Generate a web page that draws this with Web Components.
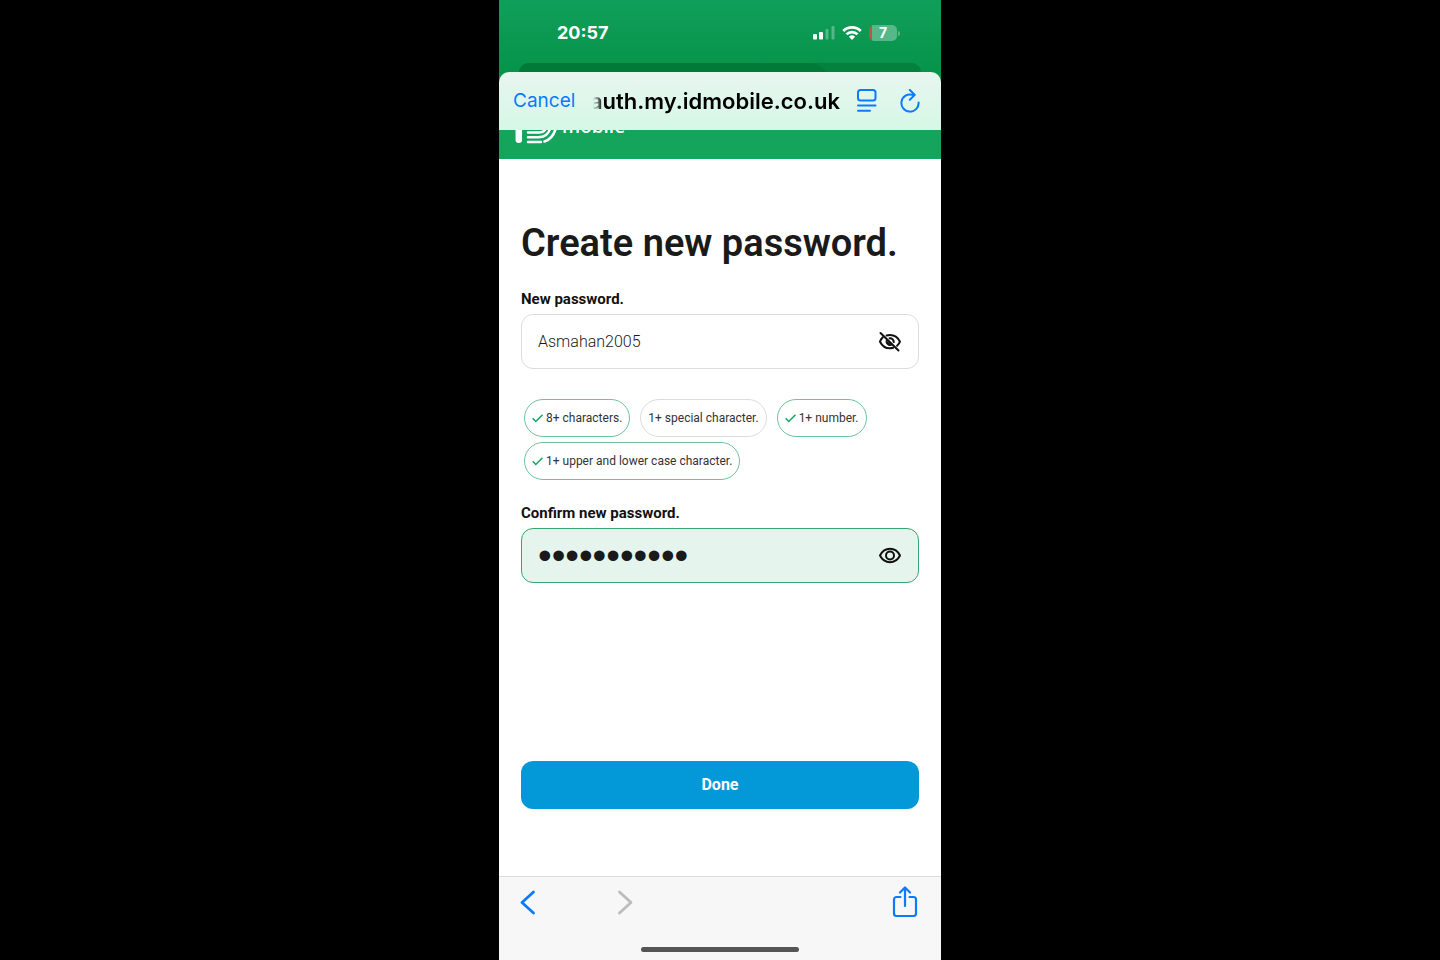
<!DOCTYPE html>
<html lang="en">
<head>
<meta charset="utf-8">
<meta name="viewport" content="width=device-width, initial-scale=1">
<title>Create new password</title>
<style>
  html, body {
    margin: 0;
    background: #000;
  }
</style>
</head>
<body>
<phone-screen>
  <status-bar slot="status" time="20:57" battery="7"></status-bar>
  <browser-bar slot="bar">auth.my.idmobile.co.uk</browser-bar>
  <site-header></site-header>
  <password-form>
    <span slot="title">Create new password.</span>
    <password-field label="New password." value="Asmahan2005" shown></password-field>
    <div slot="rules">
      <rule-chip met>8+ characters.</rule-chip>
      <rule-chip>1+ special character.</rule-chip>
      <rule-chip met>1+ number.</rule-chip>
      <rule-chip met>1+ upper and lower case character.</rule-chip>
    </div>
    <password-field slot="confirm" label="Confirm new password." value="Asmahan2005" valid></password-field>
  </password-form>
  <browser-toolbar slot="toolbar"></browser-toolbar>
</phone-screen>

<script>
// every element renders its template into an open shadow root
class Base extends HTMLElement {
  constructor() {
    super();
    this.dom = this.attachShadow({ mode: "open" });
  }

  connectedCallback() {
    const temp = document.createElement("template");
    temp.innerHTML = this.template();
    this.dom.appendChild(document.importNode(temp.content, true));
    if (this.ready) this.ready();
  }
}

class PhoneScreen extends Base {
  template() {
    return `
<style>
  :host {
    display: flex;
    flex-direction: column;
    max-width: 442px;
    min-height: 100vh;
    margin: 0 auto;
    background: #fff;
    font-family: Roboto, "Liberation Sans", sans-serif;
    color: #1a1a1a;
  }
  main {
    display: flex;
    flex-direction: column;
    flex: 1;
  }
</style>
<slot name="status"></slot>
<slot name="bar"></slot>
<main><slot></slot></main>
<slot name="toolbar"></slot>`;
  }
}

class StatusBar extends Base {
  template() {
    return `
<style>
  :host {
    display: flex;
    flex-direction: column;
    justify-content: space-between;
    height: 72px;
    background: linear-gradient(#109f5a, #06934a);
    color: #fff;
    font-family: Inter, sans-serif;
  }
  .row {
    display: flex;
    align-items: center;
    justify-content: space-between;
    padding: 20px 41px 0 58px;
    font-size: 18px;
    font-weight: 700;
    line-height: 26px;
  }
  .icons {
    display: flex;
    align-items: center;
    gap: 7px;
  }
  svg {
    display: block;
  }
  .battery {
    display: flex;
    align-items: center;
    gap: 1px;
  }
  .level {
    width: 28px;
    border-radius: 5px;
    background: linear-gradient(90deg, #b9573f 3px, #56b789 3px);
    font-size: 14px;
    line-height: 16px;
    text-align: center;
  }
  .cap {
    width: 2px;
    height: 5px;
    border-radius: 0 2px 2px 0;
    background: #56b789;
  }
  .behind {
    height: 9px;
    margin: 0 20px;
    border-radius: 9px 9px 0 0;
    background: linear-gradient(35deg, #027a37 74%, #04813f 75%);
  }
</style>
<div class="row">
  <span>${this.getAttribute("time")}</span>
  <div class="icons">
    <svg width="22" height="15" viewBox="0 0 22 15" fill="#fff">
      <rect x="0" y="8" width="4" height="5.500" rx="1"/>
      <rect x="6" y="6" width="4" height="7.500" rx="1"/>
      <rect x="12.500" y="3" width="3" height="10.500" rx="1" opacity=".3"/>
      <rect x="18.500" y="0" width="3" height="13.500" rx="1" opacity=".3"/>
    </svg>
    <svg width="20" height="15" viewBox="0 0 20 15" fill="none" stroke="#fff" stroke-width="2.7">
      <path d="M1.2 5a12.6 12.6 0 0 1 17.6 0M4.5 8.400a7.9 7.9 0 0 1 11 0"/>
      <path d="M10 13.900 6.9 10.800a4.5 4.5 0 0 1 6.2 0z" fill="#fff" stroke="none"/>
    </svg>
    <div class="battery">
      <span class="level">${this.getAttribute("battery")}</span>
      <span class="cap"></span>
    </div>
  </div>
</div>
<div class="behind"></div>`;
  }
}

class BrowserBar extends Base {
  template() {
    return `
<style>
  :host {
    display: block;
    position: relative;
    z-index: 1;
    background: #06934a;
    font-family: Inter, sans-serif;
  }
  header {
    display: flex;
    align-items: center;
    height: 58px;
    padding: 0 21px 0 14px;
    border-radius: 10px 10px 0 0;
    background: linear-gradient(#e8f6ef, #d5f8e6);
  }
  button {
    padding: 0;
    border: 0;
    background: none;
    color: #0a7aff;
    font: 400 19px/28px Inter, sans-serif;
  }
  .address {
    display: flex;
    flex: 1;
    justify-content: flex-end;
    overflow: hidden;
    margin: 0 17px 0 18px;
    color: #000;
    font-size: 22px;
    font-weight: 600;
    line-height: 28px;
    white-space: nowrap;
    -webkit-mask-image: linear-gradient(90deg, transparent, #000 10px);
    mask-image: linear-gradient(90deg, transparent, #000 10px);
  }
  .reload {
    margin-left: 23px;
  }
  svg {
    display: block;
    fill: none;
    stroke: currentColor;
    stroke-width: 2;
    stroke-linecap: round;
    stroke-linejoin: round;
  }
</style>
<header>
  <button type="button">Cancel</button>
  <div class="address"><slot></slot></div>
  <button type="button" aria-label="Page menu">
    <svg width="20" height="24" viewBox="0 0 20 24">
      <rect x="1" y="1" width="17.500" height="10.500" rx="2.500"/>
      <path d="M1 16.500h17.500M1 21.800h12"/>
    </svg>
  </button>
  <button type="button" class="reload" aria-label="Reload">
    <svg width="20" height="24" viewBox="0 0 20 24">
      <path d="M12.500 5.800A8.600 8.600 0 1 0 18.600 13.500M9.800 1l5 4.900-5 4.900"/>
    </svg>
  </button>
</header>`;
  }
}

class SiteHeader extends Base {
  template() {
    return `
<style>
  :host {
    display: block;
    margin-top: -30px;
    background: #14a45c;
    color: #fff;
  }
  a {
    display: flex;
    align-items: flex-end;
    gap: 4px;
    padding: 1px 16px 15px;
    color: inherit;
    font: 600 19px/28px "Open Sans", sans-serif;
    text-decoration: none;
  }
  svg {
    display: block;
  }
  span {
    margin-bottom: 4px;
  }
</style>
<a href="#">
  <svg width="43" height="43" viewBox="0 0 43 43" fill="none" stroke="#fff" stroke-linecap="round">
    <path d="M3.800 14v24.800" stroke-width="6.500"/>
    <circle cx="3.800" cy="4" r="3.500" fill="#fff" stroke="none"/>
    <path d="M13 31.500h11c5 0 8-3 8-11S28 7 21 7h-8" stroke-width="2.500"/>
    <path d="M13 36.300h10c7 0 10-3 12.500-9" stroke-width="2.500"/>
    <path d="M13 41h13M29.500 40.500c6-2 9-6 11-12" stroke-width="2.500"/>
  </svg>
  <span>mobile</span>
</a>`;
  }
}

class PasswordForm extends Base {
  template() {
    return `
<style>
  :host {
    display: flex;
    flex: 1;
  }
  form {
    display: flex;
    flex: 1;
    flex-direction: column;
    min-width: 0;
    padding: 59px 22px 67px;
  }
  h1 {
    margin: 0 0 20px;
    font-size: 38px;
    font-weight: 600;
    line-height: 50px;
  }
  ::slotted([slot="rules"]) {
    display: flex;
    flex-wrap: wrap;
    gap: 5px 10px;
    margin: 30px 3px 22px;
  }
  button {
    height: 48px;
    margin-top: auto;
    border: 0;
    border-radius: 12px;
    background: #0398d8;
    color: #fff;
    font: 700 16px/24px Roboto, sans-serif;
  }
</style>
<form>
  <h1><slot name="title"></slot></h1>
  <slot></slot>
  <slot name="rules"></slot>
  <slot name="confirm"></slot>
  <button type="button">Done</button>
</form>`;
  }
}

class PasswordField extends Base {
  get shown() {
    return this.hasAttribute("shown");
  }

  template() {
    return `
<style>
  :host {
    display: block;
  }
  label {
    display: block;
    margin-bottom: 4px;
    color: #111;
    font-size: 15px;
    font-weight: 700;
    line-height: 22px;
  }
  .box {
    display: flex;
    align-items: center;
    height: 53px;
    padding: 0 16px 0 16px;
    border: 1px solid #dcdcdc;
    border-radius: 12px;
    background: #fff;
  }
  :host([valid]) .box {
    border-color: #35a871;
    background: #e5f4ec;
  }
  input {
    flex: 1;
    min-width: 0;
    padding: 0;
    border: 0;
    outline: 0;
    background: none;
    color: #1a1a1a;
    font: 300 16px/24px Roboto, sans-serif;
  }
  input[type="password"] {
    height: 48px;
    font: 400 39px/48px "Liberation Sans", sans-serif;
  }
  button {
    padding: 0;
    border: 0;
    background: none;
    color: #111;
  }
  svg {
    display: block;
  }
  .open, :host([shown]) .closed {
    display: block;
  }
  .closed, :host([shown]) .open {
    display: none;
  }
</style>
<label for="field">${this.getAttribute("label")}</label>
<div class="box">
  <input id="field" type="${this.shown ? "text" : "password"}" value="${this.getAttribute("value")}">
  <button type="button" aria-label="Show or hide password">
    <svg class="open" width="24" height="24" viewBox="0 0 24 24" fill="none" stroke="currentColor" stroke-width="2" stroke-linejoin="round">
      <path d="M2 11.500c2-4 5.700-6.700 10-6.700s8 2.700 10 6.700c-2 4-5.700 6.700-10 6.700S4 15.500 2 11.500z"/>
      <circle cx="12" cy="11.500" r="4"/>
    </svg>
    <svg class="closed" width="24" height="24" viewBox="0 0 24 24" fill="none" stroke="currentColor" stroke-width="2" stroke-linecap="round">
      <path d="M2.500 3 20.500 20.500"/>
      <path d="M4.800 7.300C3.500 8.600 2.600 10 2 11.700c2 4.100 5.700 6.600 10 6.600 1.100 0 2.200-.2 3.200-.5M8.600 5.500C9.700 5.100 10.800 5 12 5c4.300 0 8 2.600 10 6.700-.7 1.600-1.700 2.900-2.900 4"/>
      <path d="M11.600 8.200a3.700 3.700 0 0 1 4.100 3.900"/>
      <path d="M8.300 10.300c-1 2.700.8 5.200 3.700 5.200.7 0 1.200-.1 1.700-.4z" fill="currentColor" stroke-width="1"/>
    </svg>
  </button>
</div>`;
  }

  ready() {
    const input = this.dom.querySelector("input");
    this.dom.querySelector("button").addEventListener("click", () => {
      this.toggleAttribute("shown");
      input.type = this.shown ? "text" : "password";
    });
  }
}

class RuleChip extends Base {
  template() {
    return `
<style>
  :host {
    display: flex;
    align-items: center;
    gap: 3px;
    padding: 0 7px;
    border: 1px solid #dcdcdc;
    border-radius: 19px;
    color: #333;
    font-size: 12px;
    line-height: 36px;
    white-space: nowrap;
  }
  :host([met]) {
    border-color: #6fc39b;
  }
  svg {
    display: none;
  }
  :host([met]) svg {
    display: block;
  }
</style>
<svg width="11" height="10" viewBox="0 0 11 10" fill="none" stroke="#14a45c" stroke-width="1.500">
  <path d="M.7 5.300 3.800 8.500 10.500 1.700"/>
</svg>
<slot></slot>`;
  }
}

class BrowserToolbar extends Base {
  template() {
    return `
<style>
  :host {
    display: flex;
    flex-direction: column;
    justify-content: space-between;
    height: 83px;
    border-top: 1px solid #dcdcdc;
    background: #f7f7f7;
  }
  nav {
    display: flex;
    align-items: center;
    gap: 81px;
    padding: 9px 23px 0 21px;
  }
  button {
    padding: 0;
    border: 0;
    background: none;
    color: #0a7aff;
  }
  button:disabled {
    color: #bcbcbc;
  }
  .share {
    margin-left: auto;
  }
  svg {
    display: block;
    fill: none;
    stroke: currentColor;
    stroke-linecap: round;
    stroke-linejoin: round;
  }
  .home {
    width: 158px;
    height: 5px;
    margin: 0 auto 8px;
    border-radius: 3px;
    background: #555;
  }
</style>
<nav>
  <button type="button" aria-label="Back">
    <svg width="16" height="32" viewBox="0 0 16 32" stroke-width="2.800"><path d="M13.500 6 2 16.500l11.500 10.500"/></svg>
  </button>
  <button type="button" aria-label="Forward" disabled>
    <svg width="16" height="32" viewBox="0 0 16 32" stroke-width="2.800"><path d="M2.500 6 14 16.500 2.500 27"/></svg>
  </button>
  <button type="button" class="share" aria-label="Share">
    <svg width="26" height="32" viewBox="0 0 26 32" stroke-width="2.200">
      <path d="M8.500 11H4.500a2.500 2.500 0 0 0-2.500 2.500v14A2.500 2.500 0 0 0 4.500 30h17a2.500 2.500 0 0 0 2.500-2.500v-14a2.500 2.500 0 0 0-2.500-2.500h-4"/>
      <path d="M13 20V2M8 6.500l5-5 5 5"/>
    </svg>
  </button>
</nav>
<div class="home"></div>`;
  }
}

customElements.define("phone-screen", PhoneScreen);
customElements.define("status-bar", StatusBar);
customElements.define("browser-bar", BrowserBar);
customElements.define("site-header", SiteHeader);
customElements.define("password-form", PasswordForm);
customElements.define("password-field", PasswordField);
customElements.define("rule-chip", RuleChip);
customElements.define("browser-toolbar", BrowserToolbar);
</script>
</body>
</html>
